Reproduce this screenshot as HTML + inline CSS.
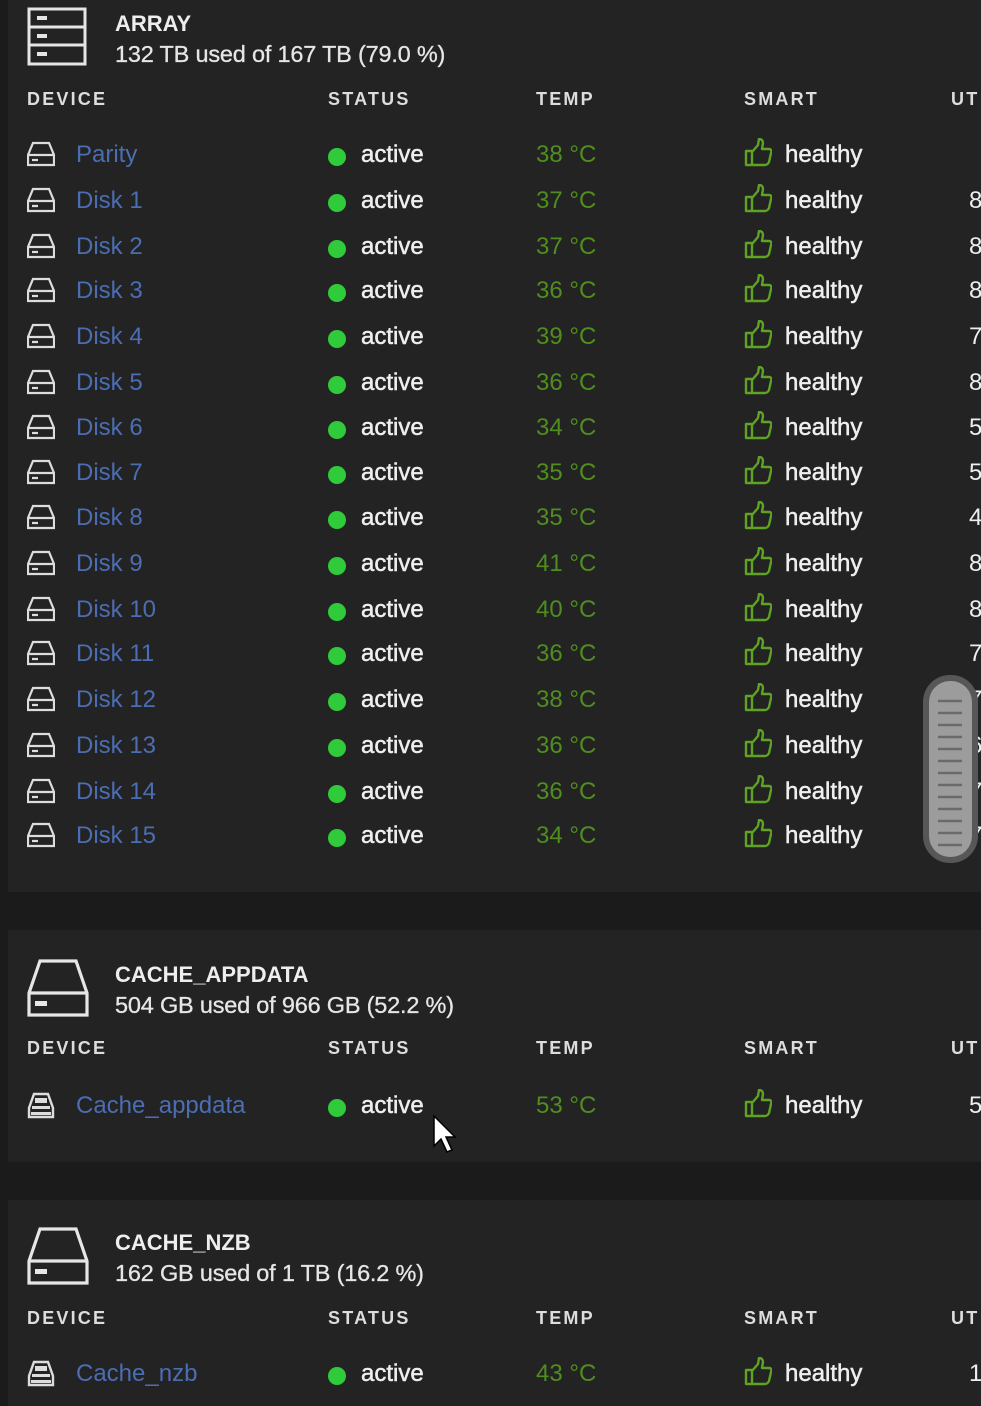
<!DOCTYPE html>
<html><head><meta charset="utf-8"><style>
*{margin:0;padding:0;box-sizing:border-box}
body{width:981px;height:1406px;background:#1b1b1b;position:relative;overflow:hidden;font-family:"Liberation Sans",sans-serif;color:#e6e6e6}
.panel{position:absolute;left:8px;right:0;background:#232323}
.a{position:absolute;white-space:nowrap}
.title{font-weight:bold;font-size:22px;color:#eee}
.sub{font-size:23.5px;color:#e6e6e6;letter-spacing:-0.2px;-webkit-text-stroke:0.3px #e6e6e6}
.hd{font-weight:bold;font-size:18px;letter-spacing:2.2px;color:#ddd}
.row{position:absolute;left:0;width:981px;height:30px;font-size:24px}
.row .ic{position:absolute;left:27px;top:0}
.row .nm{position:absolute;left:76px;top:0;color:#4b6db3}
.row .dot{position:absolute;left:328px;top:7px;width:18px;height:18px;border-radius:50%;background:#2fcb3a}
.row .st{position:absolute;left:361px;top:0;color:#eee;-webkit-text-stroke:0.5px #eee}
.row .tp{position:absolute;left:536px;top:0;color:#4f8e1e}
.row .th{position:absolute;left:744px;top:-3px}
.row .hl{position:absolute;left:785px;top:0;color:#eee;-webkit-text-stroke:0.5px #eee}
.row .ut{position:absolute;left:969px;top:0;color:#eee}
</style></head><body>
<svg width="0" height="0" style="position:absolute"><defs>
<symbol id="hdd" viewBox="0 0 28 26"><path d="M6 2h16l5 12v10H1V14z M1 14h26 M5 19h6" fill="none" stroke="#ddd" stroke-width="2.2"/></symbol>
<symbol id="cd" viewBox="0 0 28 28"><path d="M7 2h14l5 14v9H2v-9z" fill="none" stroke="#ddd" stroke-width="2.4"/><path d="M8 6h12v5H8z M5 14h18v3H5z" fill="#ddd"/><path d="M4 20h20v3H4z" fill="#ddd"/></symbol>
<symbol id="thumb" viewBox="0 0 28 30"><path d="M2 13h6v14H2z M8 14l6-7 1-6c3 0 4 2 4 4l-1 6h7c2 0 3 2 2 4l-2 9c-1 2-2 3-4 3H8" fill="none" stroke="#5ea321" stroke-width="2.4" stroke-linejoin="round"/></symbol>
</defs></svg>

<div class="panel" style="top:0;height:892px"></div>
<svg class="a" style="left:27px;top:7px" width="62" height="60" viewBox="0 0 62 60"><g fill="none" stroke="#e6e6e6" stroke-width="3"><rect x="2" y="2" width="56" height="55"/><path d="M2 20h56M2 38h56"/></g><path d="M10 9h10v4H10zM10 27h10v4H10zM10 45h10v4H10z" fill="#e6e6e6"/></svg>
<div class="a title" style="left:115px;top:11px">ARRAY</div>
<div class="a sub" style="left:115px;top:41px">132 TB used of 167 TB (79.0 %)</div>
<div class="a hd" style="left:27px;top:89px">DEVICE</div>
<div class="a hd" style="left:328px;top:89px">STATUS</div>
<div class="a hd" style="left:536px;top:89px">TEMP</div>
<div class="a hd" style="left:744px;top:89px">SMART</div>
<div class="a hd" style="left:951px;top:89px">UT</div>

<div class="row" style="top:141px"><svg class="ic" width="28" height="26"><use href="#hdd"/></svg><span class="nm">Parity</span><span class="dot"></span><span class="st">active</span><span class="tp">38 °C</span><svg class="th" width="28" height="30"><use href="#thumb"/></svg><span class="hl">healthy</span></div>
<div class="row" style="top:187px"><svg class="ic" width="28" height="26"><use href="#hdd"/></svg><span class="nm">Disk 1</span><span class="dot"></span><span class="st">active</span><span class="tp">37 °C</span><svg class="th" width="28" height="30"><use href="#thumb"/></svg><span class="hl">healthy</span><span class="ut">8</span></div>
<div class="row" style="top:233px"><svg class="ic" width="28" height="26"><use href="#hdd"/></svg><span class="nm">Disk 2</span><span class="dot"></span><span class="st">active</span><span class="tp">37 °C</span><svg class="th" width="28" height="30"><use href="#thumb"/></svg><span class="hl">healthy</span><span class="ut">8</span></div>
<div class="row" style="top:277px"><svg class="ic" width="28" height="26"><use href="#hdd"/></svg><span class="nm">Disk 3</span><span class="dot"></span><span class="st">active</span><span class="tp">36 °C</span><svg class="th" width="28" height="30"><use href="#thumb"/></svg><span class="hl">healthy</span><span class="ut">8</span></div>
<div class="row" style="top:323px"><svg class="ic" width="28" height="26"><use href="#hdd"/></svg><span class="nm">Disk 4</span><span class="dot"></span><span class="st">active</span><span class="tp">39 °C</span><svg class="th" width="28" height="30"><use href="#thumb"/></svg><span class="hl">healthy</span><span class="ut">7</span></div>
<div class="row" style="top:369px"><svg class="ic" width="28" height="26"><use href="#hdd"/></svg><span class="nm">Disk 5</span><span class="dot"></span><span class="st">active</span><span class="tp">36 °C</span><svg class="th" width="28" height="30"><use href="#thumb"/></svg><span class="hl">healthy</span><span class="ut">8</span></div>
<div class="row" style="top:414px"><svg class="ic" width="28" height="26"><use href="#hdd"/></svg><span class="nm">Disk 6</span><span class="dot"></span><span class="st">active</span><span class="tp">34 °C</span><svg class="th" width="28" height="30"><use href="#thumb"/></svg><span class="hl">healthy</span><span class="ut">5</span></div>
<div class="row" style="top:459px"><svg class="ic" width="28" height="26"><use href="#hdd"/></svg><span class="nm">Disk 7</span><span class="dot"></span><span class="st">active</span><span class="tp">35 °C</span><svg class="th" width="28" height="30"><use href="#thumb"/></svg><span class="hl">healthy</span><span class="ut">5</span></div>
<div class="row" style="top:504px"><svg class="ic" width="28" height="26"><use href="#hdd"/></svg><span class="nm">Disk 8</span><span class="dot"></span><span class="st">active</span><span class="tp">35 °C</span><svg class="th" width="28" height="30"><use href="#thumb"/></svg><span class="hl">healthy</span><span class="ut">4</span></div>
<div class="row" style="top:550px"><svg class="ic" width="28" height="26"><use href="#hdd"/></svg><span class="nm">Disk 9</span><span class="dot"></span><span class="st">active</span><span class="tp">41 °C</span><svg class="th" width="28" height="30"><use href="#thumb"/></svg><span class="hl">healthy</span><span class="ut">8</span></div>
<div class="row" style="top:596px"><svg class="ic" width="28" height="26"><use href="#hdd"/></svg><span class="nm">Disk 10</span><span class="dot"></span><span class="st">active</span><span class="tp">40 °C</span><svg class="th" width="28" height="30"><use href="#thumb"/></svg><span class="hl">healthy</span><span class="ut">8</span></div>
<div class="row" style="top:640px"><svg class="ic" width="28" height="26"><use href="#hdd"/></svg><span class="nm">Disk 11</span><span class="dot"></span><span class="st">active</span><span class="tp">36 °C</span><svg class="th" width="28" height="30"><use href="#thumb"/></svg><span class="hl">healthy</span><span class="ut">7</span></div>
<div class="row" style="top:686px"><svg class="ic" width="28" height="26"><use href="#hdd"/></svg><span class="nm">Disk 12</span><span class="dot"></span><span class="st">active</span><span class="tp">38 °C</span><svg class="th" width="28" height="30"><use href="#thumb"/></svg><span class="hl">healthy</span><span class="ut">7</span></div>
<div class="row" style="top:732px"><svg class="ic" width="28" height="26"><use href="#hdd"/></svg><span class="nm">Disk 13</span><span class="dot"></span><span class="st">active</span><span class="tp">36 °C</span><svg class="th" width="28" height="30"><use href="#thumb"/></svg><span class="hl">healthy</span><span class="ut">6</span></div>
<div class="row" style="top:778px"><svg class="ic" width="28" height="26"><use href="#hdd"/></svg><span class="nm">Disk 14</span><span class="dot"></span><span class="st">active</span><span class="tp">36 °C</span><svg class="th" width="28" height="30"><use href="#thumb"/></svg><span class="hl">healthy</span><span class="ut">7</span></div>
<div class="row" style="top:822px"><svg class="ic" width="28" height="26"><use href="#hdd"/></svg><span class="nm">Disk 15</span><span class="dot"></span><span class="st">active</span><span class="tp">34 °C</span><svg class="th" width="28" height="30"><use href="#thumb"/></svg><span class="hl">healthy</span><span class="ut">7</span></div>

<svg class="a" style="left:922px;top:674px" width="57" height="190" viewBox="0 0 57 190"><rect x="1" y="1" width="55" height="188" rx="27" fill="#575757"/><rect x="7" y="7" width="43" height="176" rx="21" fill="#9c9c9c"/><g stroke="#6a6a6a" stroke-width="2.5"><path d="M16 27h24M16 39h24M16 51h24M16 63h24M16 75h24M16 87h24M16 99h24M16 111h24M16 123h24M16 135h24M16 147h24M16 159h24M16 171h24"/></g></svg>

<div class="panel" style="top:930px;height:232px"></div>
<svg class="a" style="left:26px;top:958px" width="64" height="60" viewBox="0 0 64 60"><path d="M14 3h36l11 32v22H3V35z M3 35h58" fill="none" stroke="#e6e6e6" stroke-width="3.2"/><path d="M9 43h12v5H9z" fill="#e6e6e6"/></svg>
<div class="a title" style="left:115px;top:962px">CACHE_APPDATA</div>
<div class="a sub" style="left:115px;top:992px">504 GB used of 966 GB (52.2 %)</div>
<div class="a hd" style="left:27px;top:1038px">DEVICE</div>
<div class="a hd" style="left:328px;top:1038px">STATUS</div>
<div class="a hd" style="left:536px;top:1038px">TEMP</div>
<div class="a hd" style="left:744px;top:1038px">SMART</div>
<div class="a hd" style="left:951px;top:1038px">UT</div>
<div class="row" style="top:1092px"><svg class="ic" width="28" height="28"><use href="#cd"/></svg><span class="nm">Cache_appdata</span><span class="dot"></span><span class="st">active</span><span class="tp">53 °C</span><svg class="th" width="28" height="30"><use href="#thumb"/></svg><span class="hl">healthy</span><span class="ut">5</span></div>
<svg class="a" style="left:432px;top:1114px" width="24" height="40" viewBox="0 0 24 40"><path d="M2 2v30l7-7 6 13 5-2-6-13h9z" fill="#fff" stroke="#000" stroke-width="1.5"/></svg>

<div class="panel" style="top:1200px;height:206px"></div>
<svg class="a" style="left:26px;top:1226px" width="64" height="60" viewBox="0 0 64 60"><path d="M14 3h36l11 32v22H3V35z M3 35h58" fill="none" stroke="#e6e6e6" stroke-width="3.2"/><path d="M9 43h12v5H9z" fill="#e6e6e6"/></svg>
<div class="a title" style="left:115px;top:1230px">CACHE_NZB</div>
<div class="a sub" style="left:115px;top:1260px">162 GB used of 1 TB (16.2 %)</div>
<div class="a hd" style="left:27px;top:1308px">DEVICE</div>
<div class="a hd" style="left:328px;top:1308px">STATUS</div>
<div class="a hd" style="left:536px;top:1308px">TEMP</div>
<div class="a hd" style="left:744px;top:1308px">SMART</div>
<div class="a hd" style="left:951px;top:1308px">UT</div>
<div class="row" style="top:1360px"><svg class="ic" width="28" height="28"><use href="#cd"/></svg><span class="nm">Cache_nzb</span><span class="dot"></span><span class="st">active</span><span class="tp">43 °C</span><svg class="th" width="28" height="30"><use href="#thumb"/></svg><span class="hl">healthy</span><span class="ut">1</span></div>
</body></html>
